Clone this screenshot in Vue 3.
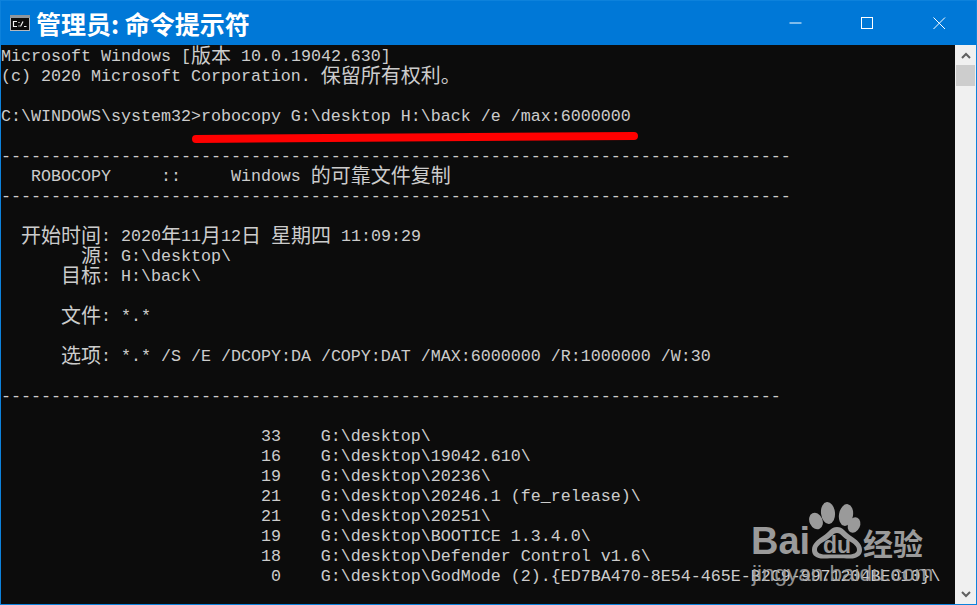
<script setup>
const source = [
  'Microsoft Windows [版本 10.0.19042.630]',
  '(c) 2020 Microsoft Corporation. 保留所有权利。',
  '',
  'C:\\WINDOWS\\system32>robocopy G:\\desktop H:\\back /e /max:6000000',
  '',
  '-'.repeat(79),
  '   ROBOCOPY     ::     Windows 的可靠文件复制',
  '-'.repeat(79),
  '',
  '  开始时间: 2020年11月12日 星期四 11:09:29',
  '        源: G:\\desktop\\',
  '      目标: H:\\back\\',
  '',
  '      文件: *.*',
  '',
  '      选项: *.* /S /E /DCOPY:DA /COPY:DAT /MAX:6000000 /R:1000000 /W:30',
  '',
  '-'.repeat(78),
  '',
  '                          33    G:\\desktop\\',
  '                          16    G:\\desktop\\19042.610\\',
  '                          19    G:\\desktop\\20236\\',
  '                          21    G:\\desktop\\20246.1 (fe_release)\\',
  '                          21    G:\\desktop\\20251\\',
  '                          19    G:\\desktop\\BOOTICE 1.3.4.0\\',
  '                          18    G:\\desktop\\Defender Control v1.6\\',
  '                           0    G:\\desktop\\GodMode (2).{ED7BA470-8E54-465E-B2C9-9971204BE010}\\',
]

const lines = source.map((text) =>
  (text.match(/[\u3000-\u9fff]+|[^\u3000-\u9fff]+/g) || []).map((t) => ({
    t,
    cjk: /[\u3000-\u9fff]/.test(t),
  }))
)
</script>

<template>
  <div class="win">
    <header class="title">
      <svg class="appicon" width="20" height="16" viewBox="0 0 20 16">
        <rect x="0" y="0" width="20" height="16" fill="#b4b8bd" />
        <rect x="0" y="0" width="20" height="3" fill="#8f959b" />
        <rect x="1" y="3" width="18" height="12" fill="#0c0c0c" />
        <path d="M7 6.500H3.500V11.500H7M9 7V8M9 10.500V11.500M10.500 11.500L13 6.500M14 11.500H16.500" fill="none" stroke="#f0f0f0" stroke-width="1.200" />
      </svg>
      <span class="caption">管理员: 命令提示符</span>
      <div class="controls">
        <span class="ctl">
          <svg width="13" height="13" viewBox="0 0 13 13"><path d="M0.500 6H12.500" stroke="#fff" stroke-width="1" /></svg>
        </span>
        <span class="ctl">
          <svg width="13" height="13" viewBox="0 0 13 13"><rect x="0.500" y="0.500" width="11" height="11" fill="none" stroke="#fff" stroke-width="1" /></svg>
        </span>
        <span class="ctl">
          <svg width="13" height="13" viewBox="0 0 13 13"><path d="M0.500 0.500L12 12M12 0.500L0.500 12" stroke="#fff" stroke-width="1" /></svg>
        </span>
      </div>
    </header>

    <div class="body">
      <main class="console">
        <div v-for="(line, i) in lines" :key="i" class="line"><span
            v-for="(seg, j) in line" :key="j" :class="{ cjk: seg.cjk }">{{ seg.t }}</span></div>
      </main>
      <aside class="scroll">
        <svg class="arrow" width="10" height="7" viewBox="0 0 10 7"><path d="M1 6L5 2L9 6" fill="none" stroke="#606060" stroke-width="2" /></svg>
        <div class="thumb"></div>
        <div class="fill"></div>
        <svg class="arrow" width="10" height="7" viewBox="0 0 10 7"><path d="M1 1L5 5L9 1" fill="none" stroke="#606060" stroke-width="2" /></svg>
      </aside>

      <svg class="mark" width="977" height="605" viewBox="0 0 977 605">
        <path d="M196 139L634 136" stroke="#f00" stroke-width="8" stroke-linecap="round" />
      </svg>

      <div class="watermark">
        <span class="bai">Bai</span>
        <svg class="paw" width="56" height="58" viewBox="0 0 56 58">
          <ellipse cx="8" cy="19" rx="6.500" ry="8.500" fill="#9a9a9a" transform="rotate(-25 8 19)" />
          <ellipse cx="20" cy="11" rx="7" ry="11" fill="#9a9a9a" transform="rotate(-6 20 11)" />
          <ellipse cx="38" cy="13" rx="7" ry="11" fill="#9a9a9a" transform="rotate(10 38 13)" />
          <ellipse cx="46" cy="23" rx="6" ry="8" fill="#9a9a9a" transform="rotate(25 46 23)" />
          <path fill="#9a9a9a" fill-rule="evenodd" d="M29 25C35 25 37 30 43 34C49 38 54 42 54 48C54 54 48 57 41 56.500C36 56 22 56 17 56.500C9 57 4 54 4 48C4 42 9 38 15 34C21 30 23 25 29 25ZM29 31C25 31 23 36 17 39C12 42 9 44 9 48C9 51 13 52.500 17 52.500H41C45 52.500 49 51 49 48C49 44 46 42 41 39C35 36 33 31 29 31Z" />
          <text x="29" y="51" text-anchor="middle" class="du">du</text>
        </svg>
        <span class="jy">经验</span>
        <span class="site">jingyan.baidu.com</span>
      </div>
    </div>
  </div>
</template>

<style>
html, body { margin: 0; background: #0078d7; }
</style>

<style scoped>
.win {
  width: 977px;
  height: 605px;
  display: flex;
  flex-direction: column;
  box-sizing: border-box;
  background: #0078d7;
  overflow: hidden;
  border: 1px solid #0d82dc;
}
.title {
  height: 44px;
  flex: none;
  display: flex;
  align-items: center;
  padding-left: 9px;
  color: #fff;
  font-family: "Noto Sans CJK SC", "Liberation Sans", sans-serif;
}
.appicon { flex: none; margin-top: -1px; }
.caption {
  margin-left: 6px;
  font-size: 25px;
  font-weight: 700;
  line-height: 44px;
  white-space: pre;
}
.controls { margin-left: auto; display: flex; padding-right: 1px; }
.ctl {
  width: 72px;
  height: 44px;
  display: flex;
  align-items: center;
  justify-content: center;
}
.body {
  position: relative;
  flex: 1;
  min-height: 0;
  display: flex;
}
.console {
  flex: 1;
  min-width: 0;
  overflow: hidden;
  box-sizing: border-box;
  padding-top: 2px;
  background: #0c0c0c;
  color: #cccccc;
  font-family: "Liberation Mono", monospace;
  font-size: 16.66px;
  line-height: 20px;
  white-space: pre;
}
.line { height: 20px; }
.cjk {
  font-family: "Noto Sans CJK SC", sans-serif;
  font-size: 20px;
  line-height: 0;
  vertical-align: -2px;
}
.scroll {
  width: 21px;
  flex: none;
  background: #f0f0f0;
  display: flex;
  flex-direction: column;
  align-items: center;
}
.arrow { flex: none; margin: 7px 0 6px; }
.thumb {
  flex: none;
  width: 19px;
  height: 21px;
  background: #cdcdcd;
}
.fill { flex: 1; }
.mark {
  position: absolute;
  left: -1px;
  top: -45px;
  pointer-events: none;
}
.watermark {
  position: absolute;
  left: 750px;
  top: 457px;
  width: 180px;
  height: 90px;
  color: #9a9a9a;
  pointer-events: none;
}
.bai {
  position: absolute;
  left: 0;
  top: 17px;
  font: 700 38px/44px "Liberation Sans", sans-serif;
}
.paw { position: absolute; left: 57px; top: 0; }
.du {
  font: 700 23px "Liberation Sans", sans-serif;
  fill: #9a9a9a;
}
.jy {
  position: absolute;
  left: 112px;
  top: 20px;
  font: 700 30px/40px "Noto Sans CJK SC", sans-serif;
}
.site {
  position: absolute;
  left: 1px;
  top: 58px;
  font: 400 22.500px/28px "Liberation Sans", sans-serif;
  color: #a0a0a0;
  opacity: 0.9;
}
</style>
